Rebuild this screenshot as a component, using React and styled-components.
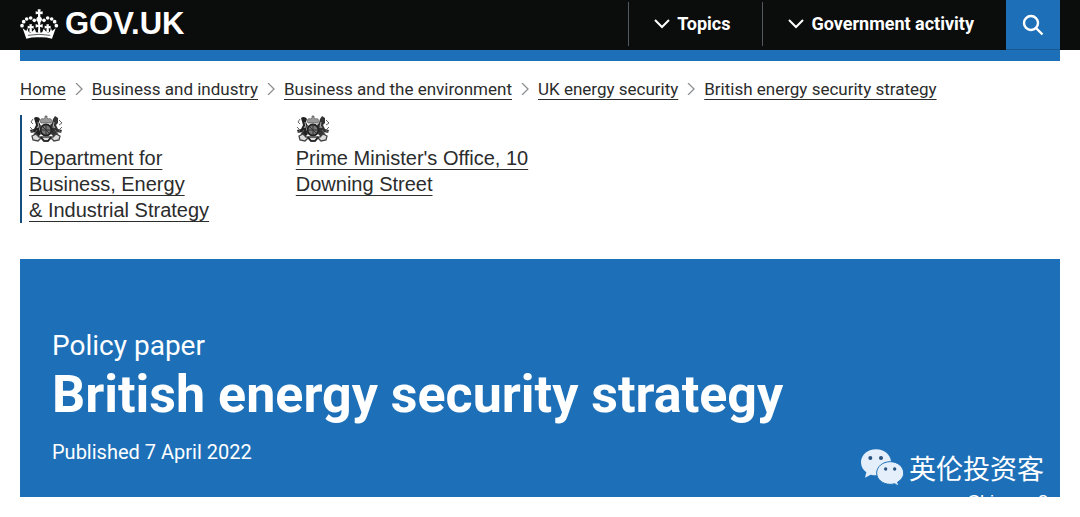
import React from "react";
import styled, { createGlobalStyle } from "styled-components";

const GlobalStyle = createGlobalStyle`
  * {
    box-sizing: border-box;
  }

  body {
    margin: 0;
    background: #fff;
    color: #0b0c0c;
    font-family: Roboto, "Liberation Sans", sans-serif;
  }
`;

const crumbs = [
  "Home",
  "Business and industry",
  "Business and the environment",
  "UK energy security",
  "British energy security strategy",
];

const departments = [
  { lines: ["Department for", "Business, Energy", "& Industrial Strategy"], ruled: true },
  { lines: ["Prime Minister's Office, 10", "Downing Street"], ruled: false },
];

// left half of the crown, the other half is mirrored
const crownDots = [
  [20, 57], [25, 45], [34, 37], [46, 34], [57, 41],
];

function CrownHalf() {
  return (
    <>
      {crownDots.map(([x, y]) => (
        <circle key={x} cx={x} cy={y} r="5.5" />
      ))}
      <path d="M22 65L33 73L36 65L40 76Q47 80 53 72L58 66L62 76Q67 80 72 74V92Q52 91 33 96z" />
      <path d="M42 53h8l-1 6 6-2v9l-6-2 1 12h-8l1-12-6 2v-9l6 2z" />
    </>
  );
}

function Crown() {
  return (
    <svg width="39" height="30" viewBox="14 7 117 90" fill="#fff" aria-hidden="true">
      <CrownHalf />
      <g transform="translate(143 0) scale(-1 1)">
        <CrownHalf />
      </g>
      <path d="M67 8h9l-1 7 7-1v9l-7-1v8c6 3 7 11 1 15l-2 10 8-3v11l-8-3 1 16h-7l1-16-8 3V52l8 3-2-10c-6-4-5-12 1-15v-8l-7 1v-9l7 1z" />
      <path d="M38 86q33-6 67 0" stroke="#0b0c0c" strokeWidth="2" fill="none" />
    </svg>
  );
}

function Crest() {
  return (
    <CrestSvg width="34" height="28" viewBox="0 0 34 28" aria-hidden="true">
      <path d="M12 8c-2-4 1-5 3-4l1-1V1h2v2l1 1c2-1 5 0 3 4z" fill="#999" stroke="#555" strokeWidth=".7" />
      <path d="M5 3c2-2 5-1 6 1l-1 3 2 4-2 3 2 5-4 4-4-2 2-4-4 1-1-3 4-1 2-4z" fill="#222" />
      <path d="M29 3l-3-2-2 3-1 4-2 2 2 4-1 5 4 4 4-2-2-4 4 1 1-3-4-1-2-4 2-2z" fill="#333" />
      <path d="M4 4L2 7l2 2M1 12l3 3-2 3M8 15l-3 4M30 5l3 3-3 2M33 12l-3 3 2 3M26 15l3 4" fill="none" stroke="#666" />
      <path d="M9 7l1 6M25 7l-1 6M10 10l-2 3M24 10l2 3" stroke="#aaa" fill="none" />
      <circle cx="17" cy="15" r="5.500" fill="#777" stroke="#222" strokeWidth="2" />
      <path d="M17 10v10M12 15h10M14 12l6 6" stroke="#333" fill="none" />
      <path d="M7 19l-4 2 1 4 5 1 3-3 3 3h4l3-3 3 3 5-1 1-4-4-2-3 3H10z" fill="#ddd" stroke="#444" strokeWidth="1.300" />
      <path d="M12 22l3 4h4l3-4" stroke="#222" strokeWidth="1.500" fill="none" />
    </CrestSvg>
  );
}

function Chat() {
  return (
    <svg width="43" height="38" viewBox="20 24 129 114" aria-hidden="true">
      <path d="M65 25C39 25 20 42 20 64c0 13 6 23 16 30l-4 16 17-9c32 8 61-9 61-37 0-22-19-39-45-39z" fill="#e4effb" />
      <path d="M108 62c-23 0-41 15-41 34s18 34 41 34q7 0 13-2l12 8-3-13c11-6 18-16 18-27 0-19-18-34-40-34z" fill="#e4effb" stroke="#1d70b8" strokeWidth="3" />
      <circle cx="48" cy="51" r="6" fill="#28527f" />
      <circle cx="80" cy="51" r="6" fill="#28527f" />
      <circle cx="94" cy="84" r="5" fill="#28527f" />
      <circle cx="121" cy="84" r="5" fill="#28527f" />
    </svg>
  );
}

const CrestSvg = styled.svg`
  display: block;
  margin-bottom: 2px;
`;

const Header = styled.header`
  background: #0b0c0c;
  color: #fff;
`;

const HeaderInner = styled.div`
  display: flex;
  justify-content: space-between;
  height: 50px;
  margin: 0 20px;
`;

const Logo = styled.a`
  display: flex;
  align-items: center;
  gap: 6px;
  padding-bottom: 3px;
  color: inherit;
  font: bold 31px/32px "Liberation Sans", sans-serif;
  text-decoration: none;
`;

const Nav = styled.nav`
  display: flex;
`;

const NavButton = styled.button`
  display: flex;
  align-items: center;
  gap: 7px;
  height: 44px;
  margin: 2px 0 0;
  padding: 0 32px 0 25px;
  border: 0;
  border-left: 1px solid #505a5f;
  background: none;
  color: inherit;
  font: bold 18px/24px Roboto, sans-serif;
`;

const SearchButton = styled.button`
  display: flex;
  align-items: center;
  justify-content: center;
  width: 54px;
  padding: 0;
  border: 0;
  border-bottom: 1px solid #17568f;
  background: #1d70b8;
  color: #fff;
`;

const BlueBar = styled.div`
  height: 11px;
  margin: 0 20px;
  background: #1d70b8;
`;

const Breadcrumbs = styled.ol`
  display: flex;
  align-items: center;
  gap: 9px;
  margin: 16px 20px 14px;
  padding: 0;
  font-size: 17px;
  line-height: 24px;
  list-style: none;
`;

const Crumb = styled.li`
  display: flex;
  align-items: center;
  gap: 9px;
  white-space: nowrap;
`;

const PlainLink = styled.a`
  color: #2b2c2c;
  text-decoration: underline;
  text-decoration-thickness: 1px;
  text-underline-offset: 4px;
`;

const Departments = styled.div`
  display: grid;
  grid-template-columns: 1fr 3fr;
  gap: 9px;
  min-height: 144px;
  margin: 0 20px;
`;

const Department = styled.div`
  align-self: start;
  padding-left: 7px;
  border-left: 2px solid ${({ $ruled }) => ($ruled ? "#144e81" : "transparent")};
  font: 20px/26px "Liberation Sans", sans-serif;
`;

const Banner = styled.section`
  position: relative;
  margin: 0 20px;
  padding: 70px 32px 32px;
  background: #1d70b8;
  color: #fff;
`;

const Kicker = styled.p`
  margin: 0;
  font-size: 28px;
  line-height: 34px;
`;

const Title = styled.h1`
  margin: 0;
  font-size: 52px;
  line-height: 64px;
`;

const Published = styled.p`
  margin: 12px 0 0;
  font-size: 20px;
  line-height: 26px;
`;

const Watermark = styled.div`
  position: absolute;
  right: 16px;
  bottom: 10px;
  display: flex;
  align-items: center;
  gap: 5px;
  font: 27px/38px "Noto Sans CJK SC", sans-serif;
`;

const Overprint = styled.div`
  position: absolute;
  right: 12px;
  bottom: -15px;
  font: 18px/20px "Liberation Sans", sans-serif;
`;

export default function App() {
  return (
    <>
      <GlobalStyle />
      <Header>
        <HeaderInner>
          <Logo href="#">
            <Crown />
            GOV.UK
          </Logo>
          <Nav>
            {["Topics", "Government activity"].map((label) => (
              <NavButton key={label}>
                <svg width="16" height="10" viewBox="0 0 16 10" fill="none" stroke="#fff" strokeWidth="2">
                  <path d="M1 1l7 7 7-7" />
                </svg>
                {label}
              </NavButton>
            ))}
            <SearchButton aria-label="Search">
              <svg width="22" height="22" viewBox="0 0 22 22" fill="none" stroke="#fff" strokeWidth="2.400">
                <circle cx="9" cy="9" r="7" />
                <path d="M14 14l6.500 6.500" />
              </svg>
            </SearchButton>
          </Nav>
        </HeaderInner>
      </Header>
      <BlueBar />
      <Breadcrumbs>
        {crumbs.map((crumb, i) => (
          <Crumb key={crumb}>
            {i > 0 && (
              <svg width="8" height="12" viewBox="0 0 8 12" fill="none" stroke="#8b8f92" strokeWidth="1.300">
                <path d="M1 0l6 6-6 6" />
              </svg>
            )}
            <PlainLink href="#">{crumb}</PlainLink>
          </Crumb>
        ))}
      </Breadcrumbs>
      <Departments>
        {departments.map(({ lines, ruled }) => (
          <Department key={lines[0]} $ruled={ruled}>
            <Crest />
            <PlainLink href="#">
              {lines.map((line) => (
                <React.Fragment key={line}>
                  {line}
                  <br />
                </React.Fragment>
              ))}
            </PlainLink>
          </Department>
        ))}
      </Departments>
      <Banner>
        <Kicker>Policy paper</Kicker>
        <Title>British energy security strategy</Title>
        <Published>Published 7 April 2022</Published>
        <Watermark>
          <Chat />
          英伦投资客
        </Watermark>
        <Overprint>Chinese 8</Overprint>
      </Banner>
    </>
  );
}
